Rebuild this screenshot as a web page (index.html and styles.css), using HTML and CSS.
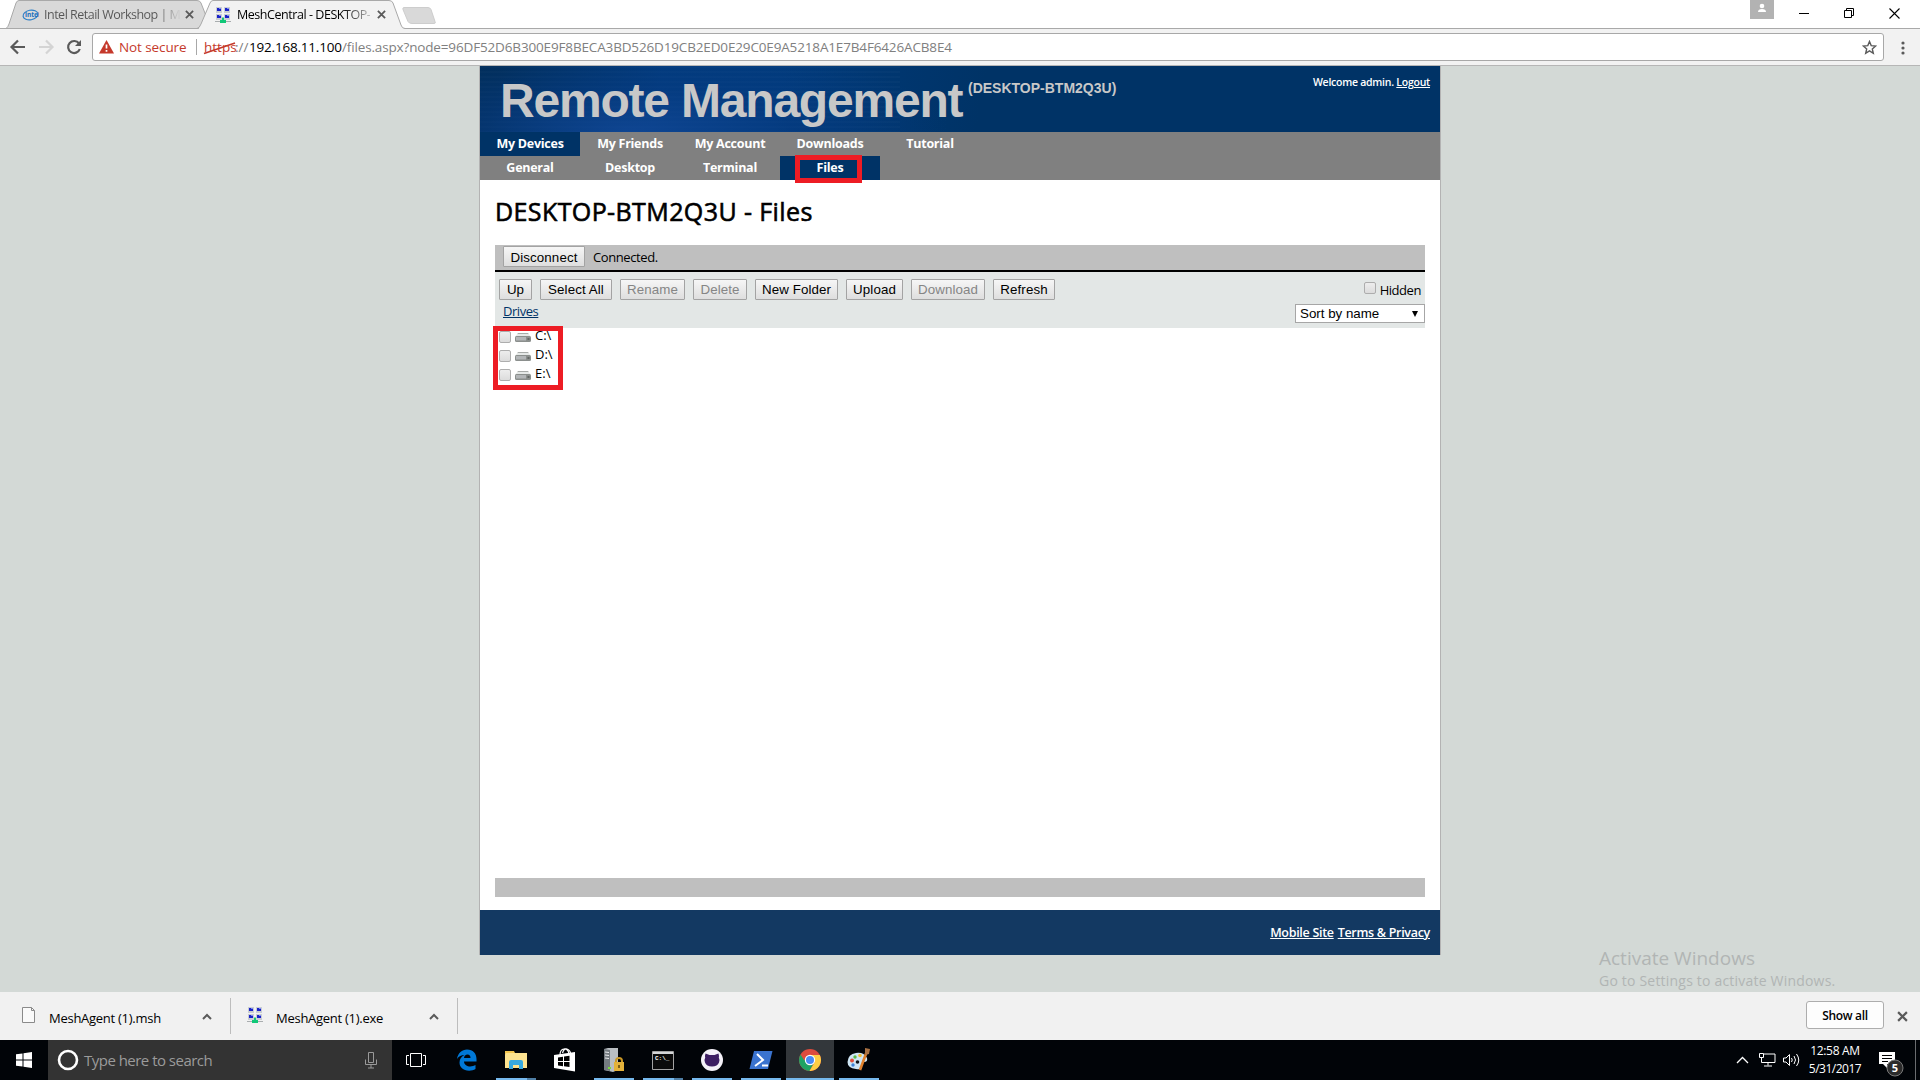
FILE: index.html
```html
<!DOCTYPE html>
<html lang="en">
<head>
<meta charset="utf-8">
<title>MeshCentral - DESKTOP-BTM2Q3U</title>
<link rel="stylesheet" href="styles.css">
</head>
<body>
<svg class="defs" width="0" height="0">
  <symbol id="mesh" viewBox="0 0 16 16">
    <path fill="#c9cdd3" d="M1 0h6v6H1zM9 0h6v6H9zM1 7h6v6H1zM9 7h6v6H9z"/>
    <path fill="#1a22c8" d="M2 1h4v3H2zM10 1h4v3h-4zM2 8h4v3H2zM10 8h4v3h-4z"/>
    <path fill="#7f8df0" d="M4 1h2v1H4zM12 1h2v1h-2zM4 8h2v1H4zM12 8h2v1h-2z"/>
    <path fill="#a9adaf" d="M0 14h16v1H0z"/>
    <path fill="#10c878" d="M7 10.500h2V13h2v3H5v-3h2z"/>
  </symbol>
  <symbol id="drive" viewBox="0 0 16 9">
    <path fill="#e6e9e8" d="M3 0h10l3 4H0z"/>
    <path fill="#a8aba9" d="M3 0h10l.6 1H2.400z"/>
    <rect y="3" width="16" height="6" rx="1.500" fill="#8b8f8d"/>
    <rect x="1" y="4" width="10" height="3.500" fill="#b3b6b8"/>
    <rect x="12.500" y="5" width="2" height="2" fill="#626664"/>
  </symbol>
  <symbol id="up" viewBox="0 0 10 7"><path d="M1 6l4-4 4 4" fill="none" stroke="#5a5a5a" stroke-width="2"/></symbol>
  <symbol id="cross" viewBox="0 0 10 10"><path d="M1 1l8 8M9 1L1 9" fill="none" stroke="#5a5a5a" stroke-width="2"/></symbol>
</svg>

<header class="tabstrip">
  <svg class="tabshapes" width="460" height="29" viewBox="0 0 460 29">
    <path d="M6 28.500Q8 27 9 24L16 3Q17 .5 19 .5H197Q200 .5 201 3L211 28.500z" fill="#d9d9d9" stroke="#a9a9a9"/>
    <path d="M198.500 29Q200 27 201 24L210 3Q211 .5 213 .5H389Q392 .5 393 3L401 25Q402 28.500 405 28.500V29z" fill="#f2f2f2"/>
    <path d="M0 28.500H197Q199.500 28 201 24L210 3Q211 .5 213 .5H389Q392 .5 393 3L401 25Q402 28.500 405 28.500H460" fill="none" stroke="#a9a9a9"/>
    <path d="M404 7.500h24q2 0 3 2l4 12q1 2-1 2h-22q-3 0-4-2l-5-12q-.6-2 1-2z" fill="#d9d9d9" stroke="#cdcdcd"/>
  </svg>
  <div class="tab tab-intel">
    <svg width="17" height="14" viewBox="0 0 17 14"><ellipse cx="8.500" cy="7" rx="7.500" ry="4.800" fill="none" stroke="#2c7fc8" stroke-width="1.200" transform="rotate(-10 8.500 7)"/><text x="3" y="9.300" font-size="6.500" font-weight="bold" fill="#1a70bd" class="intel">intel</text></svg>
    <span class="tab-title t-intel">Intel Retail Workshop | M</span>
    <svg class="tab-x" width="9" height="9"><use href="#cross"/></svg>
  </div>
  <div class="tab tab-mesh">
    <svg width="16" height="16"><use href="#mesh"/></svg>
    <span class="tab-title t-mesh">MeshCentral - DESKTOP-</span>
    <svg class="tab-x" width="9" height="9"><use href="#cross"/></svg>
  </div>
  <div class="winctl">
    <svg width="24" height="19"><path fill="#b2b2b2" d="M0 0h24v19H0z"/><circle cx="12" cy="6" r="2.300" fill="#fff"/><path d="M8 12q0-3 4-3t4 3z" fill="#fff"/></svg>
    <svg class="min" width="10" height="10"><path d="M0 5.500h10" stroke="#000"/></svg>
    <svg class="max" width="10" height="10" fill="none" stroke="#000"><path d="M.5 2.500h7v7h-7zM2.500 2.500v-2h7v7h-2"/></svg>
    <svg class="cls" width="11" height="11"><path d="M.5 .5l10 10M10.500 .5l-10 10" stroke="#000" stroke-width="1.100"/></svg>
  </div>
</header>

<div class="toolbar">
  <svg class="nav-icons" width="92" height="36" fill="none" stroke-width="2.200">
    <path d="M25 18H12M18 11.500L11.500 18l6.500 6.500" stroke="#5a5a5a"/>
    <path d="M39 18h13M46 11.500l6.500 6.500-6.500 6.500" stroke="#d4d4d4"/>
    <path d="M79 14.500A6 6 0 1 0 79.800 20" stroke="#5a5a5a"/><path d="M81 11v6h-6z" fill="#5a5a5a"/>
  </svg>
  <div class="omnibox">
    <svg width="15" height="14"><path d="M7.500 0L15 13.500H0z" fill="#c5392b"/><path d="M7.500 4.500v4M7.500 10v1.800" stroke="#fff" stroke-width="1.700"/></svg>
    <span class="notsecure">Not secure</span>
    <i class="divider"></i>
    <span class="url"><span class="https">https<svg class="slash" width="34" height="14"><path d="M1 12.500L32 2" stroke="#c5392b" stroke-width="1.500"/></svg></span><span class="u1">://</span><span class="host">192.168.11.100</span><span class="path">/files.aspx?node=96DF52D6B300E9F8BECA3BD526D19CB2ED0E29C0E9A5218A1E7B4F6426ACB8E4</span></span>
    <svg class="star" width="15" height="15" viewBox="0 0 15 15"><path d="M7.500 1.500l1.700 4.100 4.500.4-3.400 2.900 1 4.400-3.800-2.400-3.800 2.400 1-4.400L1.300 6l4.500-.4z" fill="none" stroke="#5a5a5a" stroke-width="1.400"/></svg>
  </div>
  <svg class="dots" width="4" height="14" fill="#5a5a5a"><circle cx="2" cy="2" r="1.600"/><circle cx="2" cy="7" r="1.600"/><circle cx="2" cy="12" r="1.600"/></svg>
</div>

<main class="view">
  <div class="page">
    <div class="banner">
      <div class="brand"><span class="brand-name">Remote Management</span><span class="brand-host">(DESKTOP-BTM2Q3U)</span></div>
      <div class="welcome">Welcome admin. <a>Logout</a></div>
    </div>
    <nav class="menu">
      <a class="on">My Devices</a><a>My Friends</a><a>My Account</a><a>Downloads</a><a>Tutorial</a>
    </nav>
    <nav class="menu">
      <a>General</a><a>Desktop</a><a>Terminal</a><a class="on">Files<i class="mark mark-tab"></i></a>
    </nav>
    <div class="content">
      <h1>DESKTOP-BTM2Q3U - Files</h1>
      <div class="status"><button class="disconnect">Disconnect</button><span>Connected.</span></div>
      <div class="filebar">
        <div class="left">
          <div class="buttons">
            <button class="b-up">Up</button><button class="b-sel">Select All</button><button class="b-ren" disabled>Rename</button><button class="b-del" disabled>Delete</button><button class="b-new">New Folder</button><button class="b-upl">Upload</button><button class="b-dow" disabled>Download</button><button class="b-ref">Refresh</button>
          </div>
          <a class="crumb">Drives</a>
        </div>
        <div class="right">
          <label class="hidden-opt"><i class="check"></i><span>Hidden</span></label>
          <div class="select"><span>Sort by name</span><svg width="6" height="6"><path d="M0 0h6L3 6z"/></svg></div>
        </div>
      </div>
      <div class="files">
        <div class="file"><i class="check"></i><svg width="16" height="9"><use href="#drive"/></svg><span>C:\</span></div>
        <div class="file"><i class="check"></i><svg width="16" height="9"><use href="#drive"/></svg><span>D:\</span></div>
        <div class="file"><i class="check"></i><svg width="16" height="9"><use href="#drive"/></svg><span>E:\</span></div>
        <i class="mark mark-drives"></i>
      </div>
      <div class="bottombar"></div>
    </div>
    <footer class="footer"><a class="f-mob">Mobile Site</a><a class="f-terms">Terms &amp; Privacy</a></footer>
  </div>
  <div class="watermark"><div class="w1">Activate Windows</div><div class="w2">Go to Settings to activate Windows.</div></div>
</main>

<div class="downloads">
  <div class="dl">
    <svg width="14" height="18"><path d="M.5 1.500h9l3 3V16.500H.5z" fill="#fafafa" stroke="#8a8a8a"/><path d="M9.500 1.500v3h3" fill="none" stroke="#8a8a8a"/></svg>
    <span class="d-msh">MeshAgent (1).msh</span><svg class="chev" width="10" height="7"><use href="#up"/></svg>
  </div>
  <div class="dl dl-exe">
    <svg width="16" height="16"><use href="#mesh"/></svg>
    <span class="d-exe">MeshAgent (1).exe</span><svg class="chev" width="10" height="7"><use href="#up"/></svg>
  </div>
  <div class="showall"><span>Show all</span></div>
  <svg class="dl-x" width="11" height="11" viewBox="0 0 10 10"><use href="#cross"/></svg>
</div>

<div class="taskbar">
  <div class="start"><svg width="16" height="16" fill="#fff"><path d="M0 2.300L6.500 1.400V7.500H0zM7.500 1.200L16 0v7.500H7.500zM0 8.500h6.500v6.100L0 13.700zM7.500 8.500H16V16l-8.500-1.200z"/></svg></div>
  <div class="search">
    <svg width="22" height="22"><circle cx="11" cy="11" r="9" fill="none" stroke="#fff" stroke-width="2.600"/></svg>
    <span>Type here to search</span>
    <svg class="mic" width="12" height="17" fill="none" stroke="#9a9a9a"><path d="M3.500 .5h5v10h-5zM.5 7.500v5h11v-5M6 12.500v3.500M3 16h6"/></svg>
  </div>
  <div class="app taskview"><svg width="20" height="14" fill="none" stroke="#fff"><path d="M4.500 .5h11v13h-11zM3 2.500H.5v9H3M17 2.500h2.500v9H17"/></svg></div>
  <div class="app"><svg width="22" height="22" viewBox="0 0 22 22"><path fill="#0078d7" d="M1 10C2 4 6 .5 11 .5c6 0 9.500 4 9.500 9.500v2.500H8c.2 3.500 3.200 5 6.200 5 2 0 4-.6 5.300-1.400v4c-1.700 1-4 1.600-6.300 1.600C7 21.700 3.500 18 3.500 13.500 3.500 10 5.500 7.500 8.500 6 5.500 6 2.500 7.500 1 10zM8 9h6.500c0-2-1-3.500-3-3.500S8.300 7 8 9z"/></svg></div>
  <div class="app run multi"><svg width="22" height="20" viewBox="0 0 22 20"><path d="M0 1h9l1 2h12v15H0z" fill="#f4c64e"/><path d="M1 3h21v15H0V5z" fill="#fde38f"/><path d="M4 19v-7q0-2 2-2h10q2 0 2 2v7h-4v-4H8v4z" fill="#36a9e0"/></svg></div>
  <div class="app"><svg width="22" height="24" viewBox="0 0 22 24" fill="none"><path d="M0 7l21-3v19.500L0 20z" fill="#fff"/><path d="M6 7Q6 1.500 10 1t5 5M8.500 5Q10 0 13 1t3.500 4" stroke="#fff" stroke-width="1.200"/><path d="M4 9.500l5-.7V13H4zM10 8.600l5.500-.8V13H10zM4 14h5v4.200L4 17.600zM10 14h5.500v5l-5.500-.7z" fill="#000"/></svg></div>
  <div class="app run"><svg width="22" height="24" viewBox="0 0 22 24"><path d="M1 1l4-1h10v22l-5 2-9-2z" fill="#b9bec2"/><path d="M1 1l6 1v21l-6-1z" fill="#747b80"/><path d="M2 4l4 .5M2 7l4 .5M2 10l4 .5" stroke="#e8eaec"/><path d="M5 20h3" stroke="#7bdc3a" stroke-width="2"/><path d="M13 14v-1q0-3 3-3t3 3v1" fill="none" stroke="#c99725" stroke-width="2"/><path d="M11 14h10v9H11z" fill="#e4b23b"/><path d="M16 17v3" stroke="#5b420c" stroke-width="1.500"/></svg></div>
  <div class="app run multi"><svg width="22" height="19"><path d="M.5 .5h21v18H.5z" fill="#0b0b0b" stroke="#a3a3a3"/><path d="M1 2h20" stroke="#d4d6d8" stroke-width="2"/><text x="3" y="9" font-size="6" fill="#fff" class="cmd">C:\_</text></svg></div>
  <div class="app run"><svg width="22" height="22"><circle cx="11" cy="11" r="11" fill="#f4f1f8"/><path d="M4.500 4.500l4 1.500h5l4-1.500q.8 2.500.3 4 1.200 2 .2 5Q16.500 17.500 11 17.500T4 13.500q-1-3 .2-5-.5-1.500.3-4z" fill="#3d1e63"/></svg></div>
  <div class="app run"><svg width="24" height="18"><path d="M5 0h18.500L19 18H.500z" fill="#3a73cf"/><path d="M8 3l6 6-8 6M13 14.500h6" fill="none" stroke="#fff" stroke-width="2"/></svg></div>
  <div class="app run active"><svg width="22" height="22" viewBox="0 0 22 22"><circle cx="11" cy="11" r="11" fill="#dd4b3e"/><path d="M1.500 5.500A11 11 0 0 0 10.500 22l4.500-8.500L11 11H5z" fill="#1fa363"/><path d="M11 6h9.800A11 11 0 0 1 10.500 22l5-8.500z" fill="#ffce44"/><circle cx="11" cy="11" r="5.200" fill="#fff"/><circle cx="11" cy="11" r="4" fill="#4a8af4"/></svg></div>
  <div class="app run"><svg width="24" height="24" viewBox="0 0 24 24"><path d="M.5 14Q1 6 9 5t11 5q1 4-3 4-3 0-2 4t-6 3Q.5 20 .5 14z" fill="#cfe6f5"/><circle cx="10.500" cy="14" r="1.800" fill="#10151a"/><circle cx="5" cy="12.500" r="2" fill="#e0503b"/><circle cx="8" cy="9" r="1.700" fill="#59b947"/><circle cx="13" cy="7.500" r="1.800" fill="#f1bd35"/><circle cx="6" cy="17" r="1.700" fill="#3f84d6"/><path d="M20 3l-7 19" stroke="#e0812c" stroke-width="2.600"/><path d="M18 0l5 1-1 5-4 1z" fill="#a87143"/></svg></div>
  <div class="tray">
    <svg class="t-up" width="13" height="8"><path d="M1 7l5.500-5.500L12 7" fill="none" stroke="#fff" stroke-width="1.300"/></svg>
    <svg class="t-net" width="17" height="14" fill="none" stroke="#fff"><path d="M4.500 1H16v8.500H2.500V5M.5 .5h4v4h-4zM9 9.500v3M5 13h8"/></svg>
    <svg class="t-vol" width="17" height="14" fill="none" stroke="#fff"><path d="M.5 5H3l3.500-3.500v11L3 9H.5zM8.500 5q1.500 2 0 4M11 3q3 4 0 8M13.500 1q4.500 6 0 12"/></svg>
    <div class="clock"><div class="time">12:58 AM</div><div class="date">5/31/2017</div></div>
    <svg class="t-note" width="26" height="26"><path d="M0 1h16v12H8v4l-4-4H0z" fill="#fff"/><path d="M3 4.500h10M3 7.500h10M3 10.500h6" stroke="#000"/><circle cx="16" cy="17" r="8" fill="#2b2b2b" stroke="#7a7a7a"/><text x="12.800" y="21.200" fill="#fff" class="badge">5</text></svg>
    <i class="peek"></i>
  </div>
</div>
</body>
</html>
```
FILE: styles.css
```css
* { box-sizing: border-box; }
html, body { margin: 0; height: 100%; overflow: hidden; }
body {
  display: flex; flex-direction: column; width: 1920px; height: 1080px;
  background: #d3d9d6; color: #000;
  font-family: "Open Sans", "Noto Sans", sans-serif; font-size: 13px;
}
svg { display: block; flex: none; }
.defs { position: absolute; }
i { display: block; flex: none; }
span, a { white-space: nowrap; }

/* tab strip */
.tabstrip { position: relative; display: flex; height: 29px; flex: none; background: #fff; border-bottom: 1px solid #a9a9a9; }
.tabshapes { position: absolute; left: 0; top: 0; }
.tab { position: relative; display: flex; align-items: center; height: 29px; }
.tab-intel { width: 193px; margin-left: 22px; }
.tab-mesh { width: 200px; }
.tab-title { margin-left: 6px; width: 133px; line-height: 20px; font-size: 12.5px; -webkit-background-clip: text; background-clip: text; color: transparent; }
.t-intel { width: 136px; margin-left: 5px; letter-spacing: -0.5px; background-image: linear-gradient(90deg, #555 115px, #ccc 134px); }
.t-mesh { letter-spacing: -0.45px; background-image: linear-gradient(90deg, #000 105px, #bbb 133px); }
.tab-x { margin-left: 5px; }
.t-mesh + .tab-x { margin-left: 7px; }
.intel { font-family: "Open Sans", sans-serif; }
.winctl { display: flex; margin-left: auto; width: 170px; }
.min { margin: 8px 0 0 25px; }
.max { margin: 8px 0 0 35px; }
.cls { margin: 8px 0 0 35px; }

/* address bar */
.toolbar { display: flex; height: 37px; flex: none; background: #f2f2f2; border-bottom: 1px solid #b6b6b6; }
.omnibox { display: flex; align-items: center; width: 1792px; height: 28px; margin-top: 4px; padding: 0 6px; background: #fff; border: 1px solid #a8a8a8; border-radius: 3px; font-size: 13.5px; }
.notsecure { margin-left: 5px; width: 68px; color: #c5392b; letter-spacing: -0.1px; }
.divider { width: 1px; height: 16px; margin: 0 7px 0 9px; background: #a8a8a8; }
.url { display: flex; color: #808080; }
.https { position: relative; width: 31px; color: #c5392b; }
.slash { position: absolute; left: -1px; top: 3px; }
.u1 { width: 14px; }
.host { width: 93px; color: #000; letter-spacing: -0.2px; }
.path { letter-spacing: -0.15px; }
.star { margin-left: auto; }
.dots { margin: 12px 0 0 17px; }

/* site */
.view { position: relative; flex: 1; }
.page { width: 962px; height: 889px; margin-left: 479px; border: 1px solid #b3b3b3; border-width: 0 1px; background: #fff; display: flex; flex-direction: column; }
.banner { display: flex; justify-content: space-between; height: 66px; flex: none; background: radial-gradient(ellipse 320px 90px at 150px 66px, rgba(18,72,152,.8) 0%, rgba(8,60,133,.5) 50%, rgba(0,51,102,0) 100%), repeating-linear-gradient(rgba(255,255,255,.02) 0 2px, transparent 2px 5px) 0 0 / 420px 100% no-repeat, linear-gradient(100deg, #002c55 20px, #003a7b 180px, #003a7b 300px, #003366 500px); }
.brand { display: flex; padding-left: 20px; font: bold 48px/56px "Liberation Sans", Arial, sans-serif; color: #c8c8c8; }
.brand-name { width: 464px; padding-top: 7px; letter-spacing: -1.2px; }
.brand-host { margin-left: 4px; padding-top: 14px; font-size: 14px; line-height: 16px; }
.welcome { padding: 9px 10px 0 0; color: #fff; font-size: 10.5px; line-height: 15px; font-weight: 600; letter-spacing: -0.25px; }
a { text-decoration: none; }
.welcome a, .footer a, .crumb { text-decoration: underline; }
.menu { display: flex; height: 24px; flex: none; background: #808080; }
.menu a { position: relative; width: 100px; line-height: 23px; text-align: center; color: #fff; font-weight: bold; font-size: 12.500px; letter-spacing: -0.25px; }
.menu .on { background: #036; }
.mark { position: absolute; border: 5px solid #ed1c24; }
.mark-tab { left: 15px; top: -1px; width: 67px; height: 28px; }
.content { padding: 0 15px; height: 730px; display: flex; flex-direction: column; }
h1 { margin: 0; height: 65px; padding-top: 12px; font-size: 25px; line-height: 38px; font-weight: 400; letter-spacing: 0.4px; -webkit-text-stroke: 0.6px #000; }
.status { display: flex; align-items: center; height: 27px; padding: 0 8px 2px; background: #bfbfbf; border-bottom: 2px solid #000; }
.status span { margin-left: 8px; letter-spacing: -0.4px; }
button { height: 21px; padding: 0; font: 13.333px "Liberation Sans", Arial, sans-serif; letter-spacing: 0.1px; color: #000; border: 1px solid #a3a3a3; border-radius: 1px; background: linear-gradient(#f6f6f6, #dedede); }
button:disabled { color: #858585; }
.disconnect { width: 82px; padding-top: 1px; }
.filebar { display: flex; justify-content: space-between; height: 56px; background: #e3e7e6; }
.left { padding: 7px 0 0 4px; }
.buttons { display: flex; gap: 8px; }
.b-up { width: 33px; } .b-sel { width: 72px; } .b-ren { width: 65px; } .b-del { width: 54px; }
.b-new { width: 83px; } .b-upl { width: 57px; } .b-dow { width: 74px; } .b-ref { width: 62px; }
.crumb { display: block; margin: 1px 0 0 4px; line-height: 20px; color: #036; letter-spacing: -0.45px; }
.right { display: flex; flex-direction: column; align-items: flex-end; width: 130px; }
.hidden-opt { display: flex; gap: 4px; padding: 10px 4px 0 0; height: 32px; }
.hidden-opt span { line-height: 17px; letter-spacing: -0.45px; }
.check { width: 12px; height: 12px; border: 1px solid #adadad; border-radius: 2px; background: linear-gradient(#ededed, #dcdcdc); }
.select { display: flex; justify-content: space-between; align-items: center; width: 130px; height: 19px; padding: 0 6px 0 4px; border: 1px solid #a6a6a6; background: #fff; font: 13.333px "Liberation Sans", Arial, sans-serif; }
.files { position: relative; flex: 1; }
.file { display: flex; height: 19px; padding-left: 4px; }
.file .check { margin-top: 3px; }
.file svg { margin: 5px 4px 0; }
.file span { line-height: 15px; }
.mark-drives { left: -2px; top: -2px; width: 70px; height: 64px; }
.bottombar { height: 19px; margin-bottom: 13px; background: #bfbfbf; }
.footer { display: flex; justify-content: flex-end; gap: 4px; height: 45px; padding: 14px 10px 0 0; background: #133962; color: #fff; font-size: 12.500px; line-height: 18px; font-weight: 600; letter-spacing: -0.3px; }
.watermark { position: absolute; left: 1599px; top: 880px; color: #b1b5b4; }
.w1 { font-size: 19px; line-height: 24px; }
.w2 { font-size: 14px; line-height: 21px; letter-spacing: 0.2px; }

/* download shelf */
.downloads { display: flex; align-items: center; height: 48px; flex: none; background: #f1f1f1; }
.dl { display: flex; align-items: center; width: 231px; height: 36px; padding-left: 22px; border-right: 1px solid #bdbdbd; }
.dl-exe { width: 227px; padding-left: 16px; }
.dl > svg:first-child { margin-top: -2px; }
.dl span { margin-left: 13px; width: 153px; padding-top: 3px; letter-spacing: -0.27px; }
.showall { display: flex; align-items: center; justify-content: center; width: 78px; height: 28px; margin: -2px 0 0 auto; border: 1px solid #adadad; border-radius: 3px; background: #fdfdfd; font-size: 12px; font-weight: 600; letter-spacing: -0.3px; }
.dl-x { margin: 0 12px 0 13px; }

/* taskbar */
.taskbar { display: flex; height: 40px; flex: none; background: #010408; color: #fff; }
.start { display: flex; align-items: center; justify-content: center; width: 48px; }
.search { display: flex; align-items: center; width: 344px; padding: 0 15px 0 9px; background: #333; color: #9b9b9b; font-size: 15px; letter-spacing: -0.52px; }
.search span { margin-left: 5px; }
.mic { margin-left: auto; }
.app { position: relative; display: flex; align-items: center; justify-content: center; width: 48px; margin-right: 1px; }
.taskview { margin-right: 3px; }
.run::after { content: ""; position: absolute; left: 4px; bottom: 0; width: 40px; height: 2px; background: #76b9ed; }
.multi::after { background: linear-gradient(90deg, #76b9ed 31px, #4f7fa6 31px); }
.active { background: #33373b; }
.active::after { left: 0; width: 48px; }
.tray { display: flex; margin-left: auto; width: 184px; }
.t-up { margin-top: 16px; }
.t-net { margin: 13px 0 0 10px; }
.t-vol { margin: 13px 0 0 7px; }
.clock { width: 60px; margin-left: 5px; font-size: 12px; line-height: 18px; text-align: center; padding-top: 2px; }
.time { letter-spacing: -0.3px; }
.date { letter-spacing: -0.5px; }
.t-note { margin: 11px 0 0 14px; }
.badge { font-size: 11px; font-weight: bold; }
.cmd { font-family: "Liberation Mono", monospace; font-weight: bold; }
.peek { width: 1px; height: 40px; margin-left: auto; margin-right: 4px; background: #6a6c6f; }
```
